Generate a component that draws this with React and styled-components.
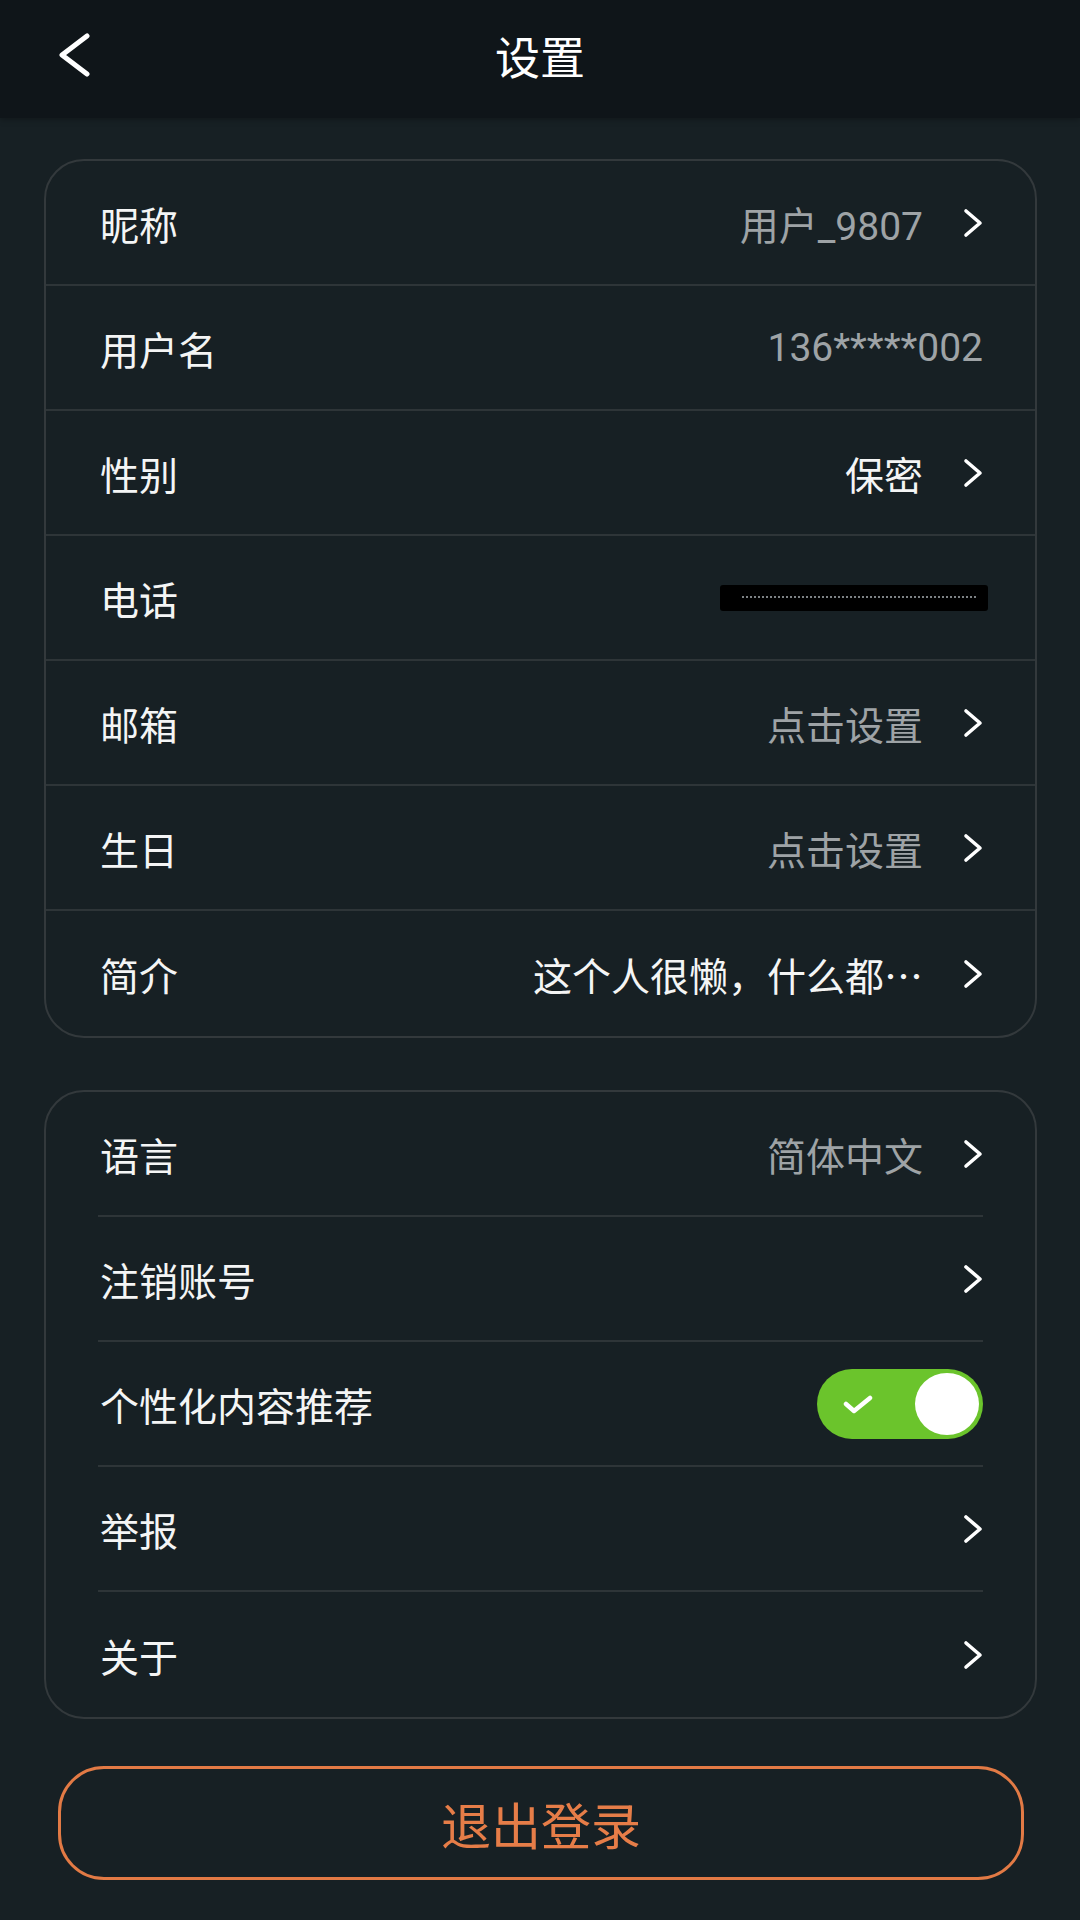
import React from 'react';
import styled, { createGlobalStyle } from 'styled-components';

const GlobalStyle = createGlobalStyle`
  html, body {
    margin: 0;
    padding: 0;
    background: #172024;
  }
  * {
    box-sizing: border-box;
  }
`;

const Page = styled.div`
  min-height: 1920px;
  background: #172024;
  font-family: Roboto, 'Noto Sans CJK SC', sans-serif;
  color: #fff;
`;

const Header = styled.div`
  display: grid;
  grid-template-columns: 1fr auto 1fr;
  align-items: center;
  height: 118px;
  padding: 0 57px 8px 57px;
  background: #0f1519;
  box-shadow: 0 2px 6px rgba(0, 0, 0, 0.25);
`;

const BackButton = styled.div`
  display: flex;
  align-items: center;
  width: 34px;
  height: 44px;
`;

const Title = styled.div`
  font-family: 'Noto Sans CJK SC', sans-serif;
  font-size: 45px;
  color: #fff;
`;

const Content = styled.div`
  display: flex;
  flex-direction: column;
  gap: 52px;
  padding: 41px 43px 0 44px;
`;

const Card = styled.div`
  border: 2px solid #33393c;
  border-radius: 40px;
  overflow: hidden;
`;

const Row = styled.div`
  display: flex;
  align-items: center;
  height: 125px;
  padding: 0 52px 0 54px;
  border-bottom: ${(p) => (p.last ? 'none' : '2px solid #2e3538')};
`;

const InsetRow = styled.div`
  padding: 0 52px 0 52px;
`;

const InsetInner = styled.div`
  display: flex;
  align-items: center;
  height: 125px;
  padding-left: 2px;
  border-bottom: ${(p) => (p.last ? 'none' : '2px solid #2e3538')};
`;

const Label = styled.div`
  flex: 1;
  font-family: 'Noto Sans CJK SC', sans-serif;
  font-size: 39px;
  color: #f4f5f5;
`;

const Value = styled.div`
  font-family: ${(p) => (p.cjk ? "'Noto Sans CJK SC', sans-serif" : "Roboto, 'Noto Sans CJK SC', sans-serif")};
  font-size: 39px;
  color: ${(p) => (p.bright ? '#f4f5f5' : '#9ea3a6')};
`;

const Arrow = styled.svg`
  margin-left: 40px;
  flex-shrink: 0;
`;

const Redacted = styled.div`
  position: relative;
  width: 268px;
  height: 26px;
  margin-right: -5px;
  background: #000;
  border-radius: 3px;

  &::after {
    content: '';
    position: absolute;
    left: 22px;
    right: 12px;
    top: 11px;
    border-top: 2px dotted #7d8285;
  }
`;

const Toggle = styled.div`
  display: flex;
  align-items: center;
  justify-content: space-between;
  width: 166px;
  height: 70px;
  padding: 0 4px 0 26px;
  border-radius: 35px;
  background: #6bc42c;
`;

const Knob = styled.div`
  width: 64px;
  height: 62px;
  border-radius: 50%;
  background: #fff;
`;

const LogoutButton = styled.div`
  display: flex;
  align-items: center;
  justify-content: center;
  height: 114px;
  margin: -5px 13px 0 14px;
  border: 3px solid #e27a45;
  border-radius: 46px;
  font-family: 'Noto Sans CJK SC', sans-serif;
  font-size: 50px;
  color: #e67d48;
`;

const Chevron = () => (
  <Arrow width="20" height="30" viewBox="0 0 20 30">
    <polyline points="3,3 17,15 3,27" fill="none" stroke="#fff" strokeWidth="3.6" strokeLinecap="round" strokeLinejoin="round" />
  </Arrow>
);

const profileRows = [
  { label: '昵称', value: '用户_9807', arrow: true },
  { label: '用户名', value: '136*****002' },
  { label: '性别', value: '保密', bright: true, arrow: true },
  { label: '电话', redacted: true },
  { label: '邮箱', value: '点击设置', arrow: true },
  { label: '生日', value: '点击设置', arrow: true },
  { label: '简介', value: '这个人很懒，什么都…', bright: true, cjk: true, arrow: true },
];

const otherRows = [
  { label: '语言', value: '简体中文', arrow: true },
  { label: '注销账号', arrow: true },
  { label: '个性化内容推荐', toggle: true },
  { label: '举报', arrow: true },
  { label: '关于', arrow: true },
];

const RowBody = ({ row }) => (
  <>
    <Label>{row.label}</Label>
    {row.value && (
      <Value bright={row.bright} cjk={row.cjk}>
        {row.value}
      </Value>
    )}
    {row.redacted && <Redacted />}
    {row.toggle && (
      <Toggle>
        <svg width="30" height="20" viewBox="0 0 30 20">
          <polyline points="3,10 11,17 27,4" fill="none" stroke="#fff" strokeWidth="4.5" strokeLinecap="round" strokeLinejoin="round" />
        </svg>
        <Knob />
      </Toggle>
    )}
    {row.arrow && <Chevron />}
  </>
);

export default function App() {
  return (
    <Page>
      <GlobalStyle />
      <Header>
        <BackButton>
          <svg width="34" height="44" viewBox="0 0 34 44">
            <polyline points="30,3 5,22 30,41" fill="none" stroke="#fff" strokeWidth="5" strokeLinecap="round" strokeLinejoin="round" />
          </svg>
        </BackButton>
        <Title>设置</Title>
        <div />
      </Header>
      <Content>
        <Card>
          {profileRows.map((row, i) => (
            <Row key={row.label} last={i === profileRows.length - 1}>
              <RowBody row={row} />
            </Row>
          ))}
        </Card>
        <Card>
          {otherRows.map((row, i) => (
            <InsetRow key={row.label}>
              <InsetInner last={i === otherRows.length - 1}>
                <RowBody row={row} />
              </InsetInner>
            </InsetRow>
          ))}
        </Card>
        <LogoutButton>退出登录</LogoutButton>
      </Content>
    </Page>
  );
}
